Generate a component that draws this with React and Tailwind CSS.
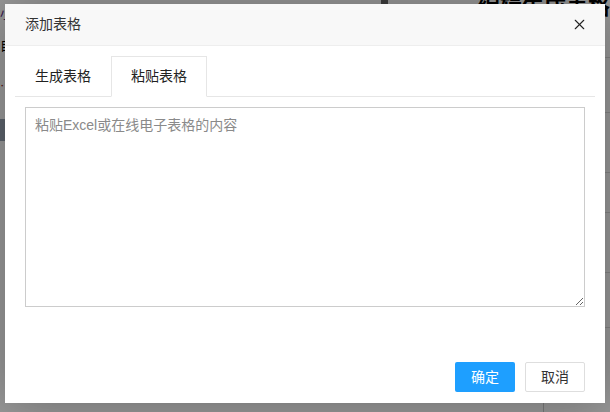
import { X } from "lucide-react";

export default function App() {
  return (
    <div
      className="relative w-[610px] h-[412px] overflow-hidden bg-white"
      style={{ fontFamily: '"Liberation Sans", "Noto Sans CJK SC", sans-serif' }}
    >
      {/* page behind the modal */}
      <div className="flex h-full">
        <div className="w-[383px] flex flex-col gap-3 pt-1 text-[13px] text-[#5b2a86]">
          <span>小</span>
          <span className="text-black">自</span>
          <span className="text-[#8b0000] mt-2">·</span>
          <div className="h-[22px] w-[10px] bg-[#9aa5b5] mt-3" />
        </div>
        <div className="w-[7px] h-[10px] bg-[#666]" />
        <div className="flex-1 flex flex-col">
          <div className="pl-[90px] -mt-[10px] text-[22px] font-bold text-black whitespace-nowrap">编辑生成表格</div>
          <div className="flex-1 border-l border-[#ccc] ml-[155px] flex flex-col">
            <div className="h-[35px] border-b border-[#ddd]" />
            <div className="h-[55px] border-b border-[#ddd]" />
            <div className="h-[60px] border-b border-[#ddd]" />
            <div className="h-[40px] border-b border-[#ddd]" />
            <div className="h-[60px] border-b border-[#ddd]" />
            <div className="h-[55px] border-b border-[#ddd]" />
          </div>
        </div>
      </div>

      {/* shade */}
      <div className="absolute inset-0 bg-black/40" />

      {/* dialog */}
      <div className="absolute left-[5px] top-[4px] w-[600px] h-[399px] bg-white shadow-[1px_1px_50px_rgba(0,0,0,0.3)] flex flex-col">
        <div className="h-[42px] shrink-0 bg-[#f8f8f8] border-b border-[#eee] flex items-center justify-between pl-[20px] pr-[17px]">
          <span className="text-[14px] text-[#333]">添加表格</span>
          <X className="w-[17px] h-[17px] text-[#222]" strokeWidth={1.6} />
        </div>

        <div className="flex-1 flex flex-col px-[10px] pt-[11px]">
          <div className="h-[40px] flex items-end border-b border-[#e6e6e6]">
            <div className="h-[40px] px-[20px] flex items-center text-[14px] text-[#222]">生成表格</div>
            <div className="h-[41px] -mb-px px-[19px] flex items-center text-[14px] text-[#222] bg-white border border-b-white border-[#e6e6e6]">
              粘贴表格
            </div>
          </div>

          <div className="px-[10px] pt-[10px]">
            <textarea
              className="block w-full h-[200px] border border-[#ccc] px-[9px] py-[7px] text-[14px] text-[#333] placeholder:text-[#8a8a8a] outline-none resize-y"
              placeholder="粘贴Excel或在线电子表格的内容"
              style={{ fontFamily: '"Liberation Sans", "Noto Sans CJK SC", sans-serif' }}
            />
          </div>

          <div className="mt-auto mb-[11px] flex justify-end gap-[10px] pr-[10px]">
            <button className="w-[60px] h-[30px] bg-[#1e9fff] text-white text-[14px] rounded-[2px]">确定</button>
            <button className="w-[60px] h-[30px] bg-white border border-[#dedede] text-[#333] text-[14px] rounded-[2px]">取消</button>
          </div>
        </div>
      </div>
    </div>
  );
}
